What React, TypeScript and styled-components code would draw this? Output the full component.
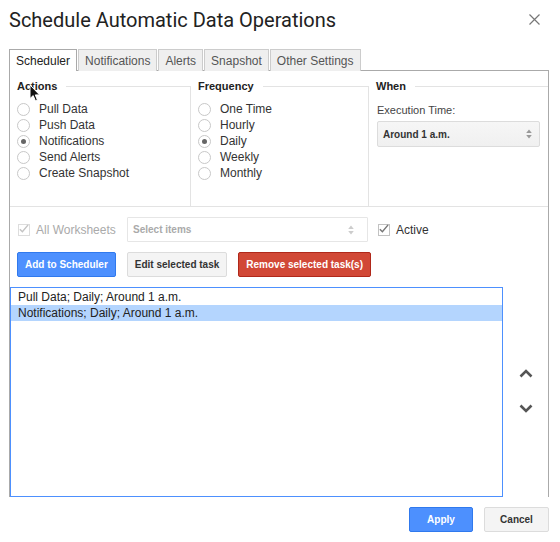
import styled, { createGlobalStyle, css } from "styled-components";

const GlobalStyle = createGlobalStyle`
  html, body {
    margin: 0;
    padding: 0;
    background: #ffffff;
  }
  body {
    font-family: "Liberation Sans", Arial, sans-serif;
    color: #333;
  }
  * {
    box-sizing: border-box;
  }
`;

type Tone = "blue" | "gray" | "red";

const actions = ["Pull Data", "Push Data", "Notifications", "Send Alerts", "Create Snapshot"];
const frequencies = ["One Time", "Hourly", "Daily", "Weekly", "Monthly"];
const tabs = ["Scheduler", "Notifications", "Alerts", "Snapshot", "Other Settings"];
const tasks = ["Pull Data; Daily; Around 1 a.m.", "Notifications; Daily; Around 1 a.m."];

const CheckMark = ({ color }: { color: string }) => (
  <svg width="12" height="12" viewBox="0 0 12 12">
    <path d="M2 6.2 L4.8 9 L11 1.5" fill="none" stroke={color} strokeWidth="1.6" />
  </svg>
);

const UpDown = ({ color }: { color: string }) => (
  <svg width="6" height="10" viewBox="0 0 6 10">
    <path d="M3 0.5 L5.8 4 L0.2 4 Z M3 9.5 L5.8 6 L0.2 6 Z" fill={color} />
  </svg>
);

const Chevron = ({ up }: { up?: boolean }) => (
  <svg width="14" height="9" viewBox="0 0 14 9">
    <path
      d={up ? "M1.5 7.5 L7 2 L12.5 7.5" : "M1.5 1.5 L7 7 L12.5 1.5"}
      fill="none"
      stroke="#555"
      strokeWidth="2.6"
    />
  </svg>
);

const App: React.FC = () => {
  return (
    <Dialog>
      <GlobalStyle />
      <Header>
        <Title>Schedule Automatic Data Operations</Title>
        <Close>
          <svg width="11" height="11" viewBox="0 0 11 11">
            <path d="M0.5 0.5 L10.5 10.5 M10.5 0.5 L0.5 10.5" stroke="#777" strokeWidth="1.2" />
          </svg>
        </Close>
      </Header>

      <Tabs>
        {tabs.map((t, i) => (
          <Tab key={t} $active={i === 0}>
            {t}
          </Tab>
        ))}
      </Tabs>

      <Panel>
        <GroupRow>
          <Group $width={181}>
            <Legend>Actions</Legend>
            <RadioList>
              {actions.map((a) => (
                <RadioRow key={a}>
                  <Radio $checked={a === "Notifications"} />
                  {a}
                </RadioRow>
              ))}
            </RadioList>
          </Group>
          <Group $width={178}>
            <Legend>Frequency</Legend>
            <RadioList>
              {frequencies.map((f) => (
                <RadioRow key={f}>
                  <Radio $checked={f === "Daily"} />
                  {f}
                </RadioRow>
              ))}
            </RadioList>
          </Group>
          <Group $width={179}>
            <Legend>When</Legend>
            <WhenBody>
              <FieldLabel>Execution Time:</FieldLabel>
              <TimeSelect>
                Around 1 a.m.
                <UpDown color="#999" />
              </TimeSelect>
            </WhenBody>
          </Group>
        </GroupRow>

        <ControlsRow>
          <CheckField $width={109} $disabled>
            <CheckBox $disabled>
              <CheckMark color="#c4c4c4" />
            </CheckBox>
            All Worksheets
          </CheckField>
          <ItemsSelect>
            Select items
            <UpDown color="#ccc" />
          </ItemsSelect>
          <CheckField>
            <CheckBox>
              <CheckMark color="#777" />
            </CheckBox>
            Active
          </CheckField>
        </ControlsRow>

        <ButtonRow>
          <Button $tone="blue">Add to Scheduler</Button>
          <Button $tone="gray">Edit selected task</Button>
          <Button $tone="red">Remove selected task(s)</Button>
        </ButtonRow>

        <ListArea>
          <TaskList>
            {tasks.map((t, i) => (
              <TaskItem key={t} $selected={i === 1}>
                {t}
              </TaskItem>
            ))}
          </TaskList>
          <MoveColumn>
            <Chevron up />
            <Chevron />
          </MoveColumn>
        </ListArea>
      </Panel>

      <Footer>
        <Button $tone="blue" $width={64}>
          Apply
        </Button>
        <Button $tone="gray" $width={65}>
          Cancel
        </Button>
      </Footer>

      <Cursor>
        <svg width="12" height="18" viewBox="0 0 12 18">
          <path
            d="M1 1 L1 14.5 L4.2 11.6 L6.4 16.8 L8.4 15.9 L6.3 10.9 L10.6 10.9 Z"
            fill="#111"
            stroke="#fff"
            strokeWidth="1"
          />
        </svg>
      </Cursor>
    </Dialog>
  );
};

export default App;

const Dialog = styled.div`
  position: relative;
  width: 560px;
  height: 542px;
  padding: 0 11px 0 9px;
`;

const Header = styled.div`
  display: flex;
  align-items: center;
  justify-content: space-between;
  height: 39px;
`;

const Title = styled.h1`
  margin: 0;
  font-family: Roboto, "Liberation Sans", Arial, sans-serif;
  font-size: 20px;
  font-weight: 400;
  color: #222;
  line-height: 24px;
`;

const Close = styled.div`
  display: flex;
  margin-right: 9px;
`;

const Tabs = styled.div`
  display: flex;
  gap: 1px;
  margin-top: 10px;
  position: relative;
  z-index: 1;
`;

const Tab = styled.div<{ $active?: boolean }>`
  height: 22px;
  padding: 0 6px;
  font-size: 12px;
  line-height: 22px;
  border: 1px solid #ccc;
  border-bottom: none;
  background: #efefef;
  color: #555;
  margin-bottom: -1px;
  ${(p) =>
    p.$active &&
    css`
      background: #fff;
      border-color: #aaa;
      color: #222;
      height: 22px;
    `}
`;

const Panel = styled.div`
  display: flex;
  flex-direction: column;
  height: 427px;
  border: 1px solid #aaa;
  border-bottom: none;
`;

const GroupRow = styled.div`
  display: flex;
  margin-top: 7px;
`;

const Group = styled.fieldset<{ $width: number }>`
  width: ${(p) => p.$width}px;
  height: 129px;
  margin: 0;
  padding: 0;
  min-width: 0;
  border: 1px solid #e3e3e3;
  border-left: none;
  &:last-child {
    border-right: none;
  }
`;

const Legend = styled.legend`
  padding: 0 9px 0 7px;
  font-size: 11px;
  font-weight: bold;
  line-height: 16px;
  color: #222;
`;

const RadioList = styled.div`
  display: flex;
  flex-direction: column;
  padding: 7px 0 0 7px;
`;

const RadioRow = styled.div`
  display: flex;
  align-items: center;
  height: 16px;
  font-size: 12px;
  color: #333;
`;

const Radio = styled.span<{ $checked?: boolean }>`
  width: 13px;
  height: 13px;
  margin-right: 9px;
  border-radius: 50%;
  border: 1px solid #c8c8c8;
  background: #fff;
  display: flex;
  align-items: center;
  justify-content: center;
  &::after {
    content: "";
    width: 5px;
    height: 5px;
    border-radius: 50%;
    background: ${(p) => (p.$checked ? "#666" : "transparent")};
  }
`;

const WhenBody = styled.div`
  padding: 8px 8px 0 8px;
`;

const FieldLabel = styled.div`
  font-size: 11px;
  line-height: 16px;
  color: #444;
`;

const TimeSelect = styled.div`
  display: flex;
  align-items: center;
  justify-content: space-between;
  width: 163px;
  height: 26px;
  margin-top: 3px;
  padding: 0 7px 0 5px;
  border: 1px solid #dcdcdc;
  border-radius: 2px;
  background: linear-gradient(#f6f6f6, #f0f0f0);
  font-size: 10px;
  font-weight: bold;
  color: #333;
`;

const ControlsRow = styled.div`
  display: flex;
  align-items: center;
  height: 25px;
  margin-top: 10px;
  padding-left: 8px;
`;

const CheckField = styled.label<{ $width?: number; $disabled?: boolean }>`
  display: flex;
  align-items: center;
  gap: 6px;
  ${(p) => p.$width && `width: ${p.$width}px;`}
  font-size: 12px;
  color: ${(p) => (p.$disabled ? "#aaa" : "#333")};
`;

const CheckBox = styled.span<{ $disabled?: boolean }>`
  display: flex;
  width: 12px;
  height: 12px;
  border: 1px solid ${(p) => (p.$disabled ? "#ddd" : "#c2c2c2")};
  background: #fff;
  overflow: visible;
  svg {
    margin: -2px 0 0 -1px;
  }
`;

const ItemsSelect = styled.div`
  display: flex;
  align-items: center;
  justify-content: space-between;
  width: 241px;
  height: 25px;
  margin-right: 10px;
  padding: 0 13px 0 5px;
  border: 1px solid #e6e6e6;
  border-radius: 1px;
  font-size: 10px;
  font-weight: bold;
  color: #aaa;
`;

const ButtonRow = styled.div`
  display: flex;
  gap: 11px;
  margin-top: 10px;
  padding-left: 7px;
`;

const tones = {
  blue: css`
    background: #4d90fe;
    border-color: #3079ed;
    color: #fff;
  `,
  gray: css`
    background: #f4f4f4;
    border-color: #dcdcdc;
    color: #333;
  `,
  red: css`
    background: #d14836;
    border-color: #b0281a;
    color: #fff;
  `,
};

const Button = styled.button<{ $tone: Tone; $width?: number }>`
  height: 25px;
  padding: 0 7px;
  ${(p) => p.$width && `width: ${p.$width}px;`}
  border: 1px solid;
  border-radius: 2px;
  font-family: "Liberation Sans", Arial, sans-serif;
  font-size: 10px;
  font-weight: bold;
  ${(p) => tones[p.$tone]}
`;

const ListArea = styled.div`
  display: flex;
  flex: 1;
  margin-top: 10px;
`;

const TaskList = styled.div`
  width: 493px;
  padding-top: 1px;
  border: 1px solid #4d90fe;
  background: #fff;
`;

const TaskItem = styled.div<{ $selected?: boolean }>`
  height: 16px;
  padding-left: 7px;
  font-size: 12px;
  line-height: 16px;
  color: #222;
  background: ${(p) => (p.$selected ? "#b4d5fe" : "transparent")};
`;

const MoveColumn = styled.div`
  flex: 1;
  display: flex;
  flex-direction: column;
  align-items: center;
  justify-content: center;
  gap: 26px;
  padding-bottom: 2px;
`;

const Footer = styled.div`
  display: flex;
  justify-content: flex-end;
  gap: 11px;
  margin-top: 10px;
`;

const Cursor = styled.div`
  position: absolute;
  left: 29px;
  top: 84px;
  display: flex;
  pointer-events: none;
`;
